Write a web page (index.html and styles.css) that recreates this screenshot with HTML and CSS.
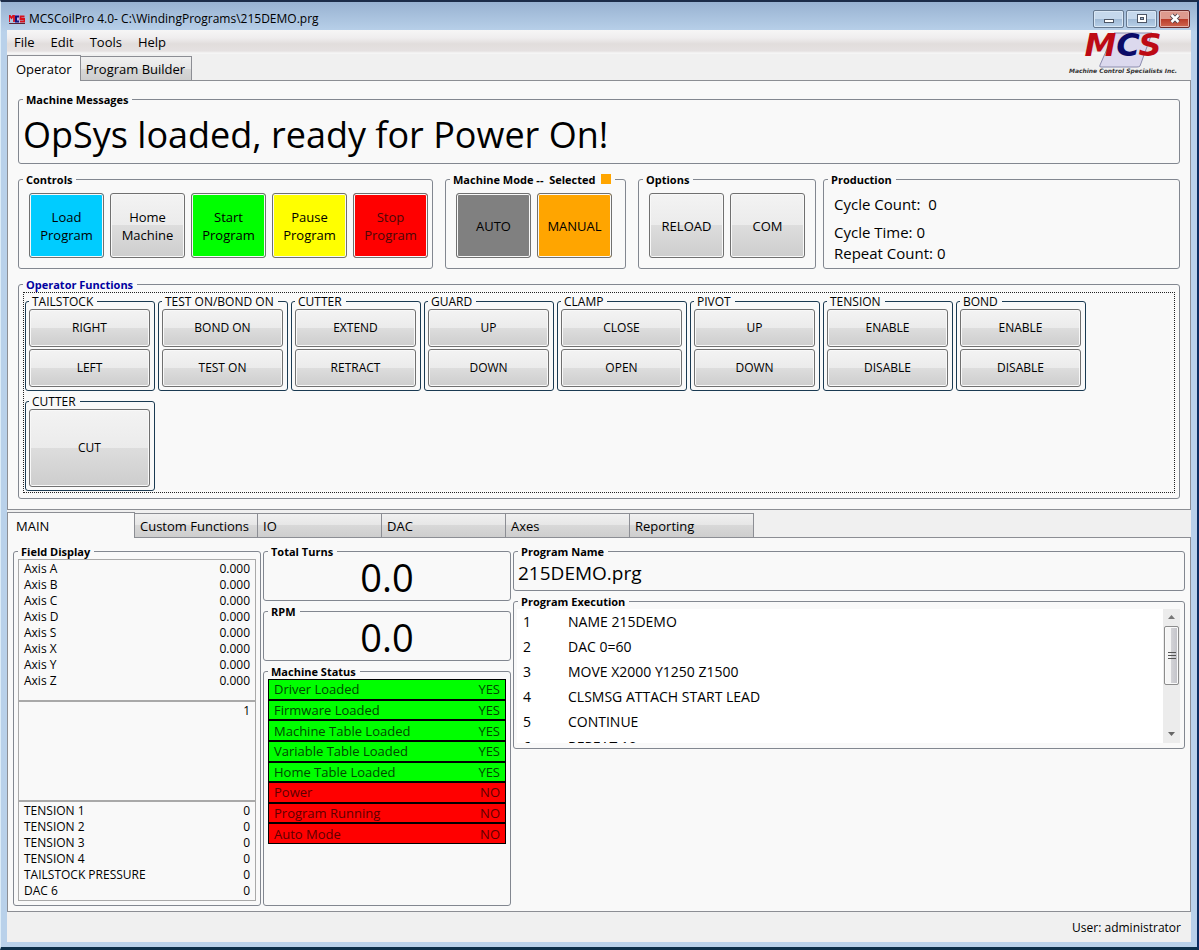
FILE: index.html
```
<!DOCTYPE html>
<html lang="en">
<head>
    <meta charset="UTF-8">
    <meta name="viewport" content="width=device-width, initial-scale=1.0">
    <title>MCSCoilPro 4.0</title>
    <link rel="stylesheet" href="styles.css">
</head>
<body>
<div class="window">
    <header class="titlebar">
        <svg class="app-icon" width="16" height="10" viewBox="0 0 16 10">
            <rect x="5" y="0" width="6" height="9" fill="#b9b4e4"/>
            <path d="M0 8V2h1l1.500 2L4 2h1v6M15.500 2.500h-4v2.500h4v2.500h-4.500" fill="none" stroke="#d8101c" stroke-width="1.800"/>
            <path d="M10 2.500H7v5h3" fill="none" stroke="#14147c" stroke-width="2"/>
            <path d="M0 9.500h16" stroke="#5b2334"/>
        </svg>
        <span class="title">MCSCoilPro 4.0- C:\WindingPrograms\215DEMO.prg</span>
        <div class="window-buttons">
            <button class="win-btn" aria-label="Minimize"><svg width="12" height="11"><rect x="1.500" y="6.500" width="9" height="3" fill="#fff" stroke="#4c5565"/></svg></button>
            <button class="win-btn" aria-label="Maximize"><svg width="12" height="11"><rect x="1.500" y="1.500" width="9" height="8" fill="#fff" stroke="#4c5565"/><rect x="4.500" y="4.500" width="3" height="2" fill="#9db5cf" stroke="#4c5565"/></svg></button>
            <button class="win-btn close" aria-label="Close"><svg width="12" height="11"><path d="M2.500 2l7 7M9.500 2l-7 7" stroke="#50424a" stroke-width="4.500"/><path d="M2.500 2l7 7M9.500 2l-7 7" stroke="#fff" stroke-width="2.500"/></svg></button>
        </div>
    </header>

    <nav class="menu">
        <button>File</button>
        <button>Edit</button>
        <button>Tools</button>
        <button>Help</button>
        <svg class="logo" width="118" height="42" viewBox="0 0 118 42">
            <path d="M50 1h38L76 34q-1 1-3 1H37q-2 0-1-2z" fill="#dcd9ee" stroke="#8c8cae"/>
            <text class="logo-name" x="59" y="24" text-anchor="middle"><tspan fill="#bd0a14">M</tspan><tspan fill="#0b0b68">C</tspan><tspan fill="#bd0a14">S</tspan></text>
            <text class="logo-tag" x="59" y="41" text-anchor="middle">Machine Control Specialists Inc.</text>
        </svg>
    </nav>

    <div class="tabs top-tabs">
        <button class="tab active">Operator</button>
        <button class="tab">Program Builder</button>
    </div>

    <main class="panel operator">
        <fieldset class="messages">
            <legend>Machine Messages</legend>
            OpSys loaded, ready for Power On!
        </fieldset>

        <div class="control-row">
            <fieldset class="buttons">
                <legend>Controls</legend>
                <button class="btn blue">Load<br>Program</button>
                <button class="btn">Home<br>Machine</button>
                <button class="btn green">Start<br>Program</button>
                <button class="btn yellow">Pause<br>Program</button>
                <button class="btn red">Stop<br>Program</button>
            </fieldset>
            <fieldset class="buttons">
                <legend>Machine Mode --&nbsp; Selected <span class="swatch"></span></legend>
                <button class="btn gray">AUTO</button>
                <button class="btn orange">MANUAL</button>
            </fieldset>
            <fieldset class="buttons">
                <legend>Options</legend>
                <button class="btn">RELOAD</button>
                <button class="btn">COM</button>
            </fieldset>
            <fieldset class="production">
                <legend>Production</legend>
                <p class="cycle-count">Cycle Count: &nbsp;0</p>
                <p>Cycle Time: 0</p>
                <p>Repeat Count: 0</p>
            </fieldset>
        </div>

        <fieldset class="functions">
            <legend>Operator Functions</legend>
            <div class="function-grid">
                <fieldset>
                    <legend>TAILSTOCK</legend>
                    <button class="btn">RIGHT</button>
                    <button class="btn">LEFT</button>
                </fieldset>
                <fieldset>
                    <legend>TEST ON/BOND ON</legend>
                    <button class="btn">BOND ON</button>
                    <button class="btn">TEST ON</button>
                </fieldset>
                <fieldset>
                    <legend>CUTTER</legend>
                    <button class="btn">EXTEND</button>
                    <button class="btn">RETRACT</button>
                </fieldset>
                <fieldset>
                    <legend>GUARD</legend>
                    <button class="btn">UP</button>
                    <button class="btn">DOWN</button>
                </fieldset>
                <fieldset>
                    <legend>CLAMP</legend>
                    <button class="btn">CLOSE</button>
                    <button class="btn">OPEN</button>
                </fieldset>
                <fieldset>
                    <legend>PIVOT</legend>
                    <button class="btn">UP</button>
                    <button class="btn">DOWN</button>
                </fieldset>
                <fieldset>
                    <legend>TENSION</legend>
                    <button class="btn">ENABLE</button>
                    <button class="btn">DISABLE</button>
                </fieldset>
                <fieldset>
                    <legend>BOND</legend>
                    <button class="btn">ENABLE</button>
                    <button class="btn">DISABLE</button>
                </fieldset>
                <fieldset>
                    <legend>CUTTER</legend>
                    <button class="btn tall">CUT</button>
                </fieldset>
            </div>
        </fieldset>
    </main>

    <div class="tabs main-tabs">
        <button class="tab active">MAIN</button>
        <button class="tab">Custom Functions</button>
        <button class="tab">IO</button>
        <button class="tab">DAC</button>
        <button class="tab">Axes</button>
        <button class="tab">Reporting</button>
    </div>

    <section class="panel details">
        <fieldset class="fields">
            <legend>Field Display</legend>
            <dl class="axes">
                <dt>Axis A</dt><dd>0.000</dd>
                <dt>Axis B</dt><dd>0.000</dd>
                <dt>Axis C</dt><dd>0.000</dd>
                <dt>Axis D</dt><dd>0.000</dd>
                <dt>Axis S</dt><dd>0.000</dd>
                <dt>Axis X</dt><dd>0.000</dd>
                <dt>Axis Y</dt><dd>0.000</dd>
                <dt>Axis Z</dt><dd>0.000</dd>
            </dl>
            <dl class="counter">
                <dt></dt><dd>1</dd>
            </dl>
            <dl class="tension">
                <dt>TENSION 1</dt><dd>0</dd>
                <dt>TENSION 2</dt><dd>0</dd>
                <dt>TENSION 3</dt><dd>0</dd>
                <dt>TENSION 4</dt><dd>0</dd>
                <dt>TAILSTOCK PRESSURE</dt><dd>0</dd>
                <dt>DAC 6</dt><dd>0</dd>
            </dl>
        </fieldset>

        <div class="column">
            <fieldset class="readout">
                <legend>Total Turns</legend>
                0.0
            </fieldset>
            <fieldset class="readout">
                <legend>RPM</legend>
                0.0
            </fieldset>
            <fieldset class="status">
                <legend>Machine Status</legend>
                <table>
                    <tr class="yes"><td>Driver Loaded</td><td>YES</td></tr>
                    <tr class="yes"><td>Firmware Loaded</td><td>YES</td></tr>
                    <tr class="yes"><td>Machine Table Loaded</td><td>YES</td></tr>
                    <tr class="yes"><td>Variable Table Loaded</td><td>YES</td></tr>
                    <tr class="yes"><td>Home Table Loaded</td><td>YES</td></tr>
                    <tr class="no"><td>Power</td><td>NO</td></tr>
                    <tr class="no"><td>Program Running</td><td>NO</td></tr>
                    <tr class="no"><td>Auto Mode</td><td>NO</td></tr>
                </table>
            </fieldset>
        </div>

        <div class="column">
            <fieldset class="program-name">
                <legend>Program Name</legend>
                215DEMO.prg
            </fieldset>
            <fieldset class="execution">
                <legend>Program Execution</legend>
                <div class="scroller">
                    <ol>
                        <li><span>1</span>NAME 215DEMO</li>
                        <li><span>2</span>DAC 0=60</li>
                        <li><span>3</span>MOVE X2000 Y1250 Z1500</li>
                        <li><span>4</span>CLSMSG ATTACH START LEAD</li>
                        <li><span>5</span>CONTINUE</li>
                        <li><span>6</span>REPEAT 10</li>
                    </ol>
                    <div class="scrollbar">
                        <svg width="17" height="17"><path d="M5 10l3.500-4 3.500 4z" fill="#777"/></svg>
                        <div class="thumb">
                            <svg width="8" height="8"><path d="M0 .5h8M0 3.500h8M0 6.500h8" stroke="#555"/></svg>
                        </div>
                        <svg class="down" width="17" height="17"><path d="M5 6l3.500 4L12 6z" fill="#666"/></svg>
                    </div>
                </div>
            </fieldset>
        </div>
    </section>

    <footer>User: administrator</footer>
</div>
</body>
</html>
```
FILE: styles.css
```
* {
    box-sizing: border-box;
}
body {
    margin: 0;
    background-color: #0c2340;
    font-family: "Open Sans", "Noto Sans", sans-serif;
    font-size: 12px;
    line-height: 16px;
    color: #000;
}
button {
    font-family: inherit;
    font-size: inherit;
    line-height: inherit;
    color: inherit;
}
.window {
    display: flex;
    flex-direction: column;
    min-height: 100vh;
    padding: 0 6px 5px;
    background: linear-gradient(#98b2d1, #b9d1ea 30px);
    border: 1px solid #dcecf8;
    border-top: 2px solid #1c2c48;
    border-right: 2px solid #0a2d62;
    border-bottom: 3px solid #0c2f4a;
}

/* title bar */
.titlebar {
    display: flex;
    align-items: center;
    height: 28px;
    padding: 5px 1px 0 2px;
}
.title {
    margin-left: 4px;
    flex: 1;
}
.window-buttons {
    display: flex;
    gap: 2px;
}
.win-btn {
    display: flex;
    align-items: center;
    justify-content: center;
    width: 31px;
    height: 18px;
    padding: 0;
    border: 1px solid #65788f;
    border-radius: 2px;
    background: linear-gradient(#c5d8ec 50%, #9fb9d5 50%, #b8d0e8);
    box-shadow: inset 0 0 0 1px #d9e7f5;
}
.win-btn.close {
    background: linear-gradient(#dd9a8e 50%, #b93a28 50%, #cf6650);
    border-color: #6b2b2b;
    box-shadow: inset 0 0 0 1px #e5b2aa;
}

/* menu */
.menu {
    position: relative;
    display: flex;
    height: 24px;
    padding-top: 2px;
    background: linear-gradient(#f6f6f6, #efedee 8px, #e1dddc 14px, #e5e1e1 21px, #f5f5f5 23px);
    font-size: 13px;
    line-height: 20px;
}
.menu button {
    padding: 0 8px 2px;
}
.menu button {
    border: 0;
    background: none;
}
.menu button:first-child {
    padding-left: 7px;
}
.logo {
    position: absolute;
    top: 2px;
    right: 9px;
    overflow: visible;
    font-family: "DejaVu Sans", sans-serif;
    font-weight: bold;
    font-style: italic;
}
.logo-name {
    font-size: 32px;
}
.logo-tag {
    font-size: 6px;
    fill: #333;
}

/* tabs */
.tabs {
    display: flex;
    align-items: flex-end;
    background-color: #f0f0f0;
}
.tab {
    height: 24px;
    padding: 1px 6px 0 5px;
    margin-left: -1px;
    border: 1px solid #8c8e94;
    border-bottom: 0;
    background: linear-gradient(#f0f0f0, #e6e6e6 50%, #d8d8d8 50%, #cecece);
    font-size: 13px;
    text-align: left;
    white-space: nowrap;
}
.tab.active {
    position: relative;
    height: 26px;
    margin: 0 0 -1px;
    padding: 0 8px;
    background: #f9f9f9;
}
.top-tabs {
    height: 26px;
}
.main-tabs {
    height: 27px;
}
.main-tabs .tab {
    width: 125px;
}
.main-tabs .active {
    width: 128px;
}
.main-tabs .tab:nth-child(2) {
    width: 124px;
}
.panel {
    background-color: #f9f9f9;
    border: 1px solid #8c8e94;
}

/* group boxes */
fieldset {
    min-width: 0;
    margin: 0;
    padding: 0 4px;
    border: 1px solid #828790;
    border-radius: 3px;
}
legend {
    height: 15px;
    padding: 0 4px 0 3px;
    font-size: 11px;
    line-height: 15px;
    font-weight: bold;
}
.operator {
    display: flex;
    flex-direction: column;
    gap: 8px;
    padding: 11px 10px 10px;
}
.messages {
    padding-bottom: 1px;
    font-size: 36px;
    line-height: 55px;
}
.control-row {
    display: grid;
    grid-template-columns: 415px 181px 178px 1fr;
    column-gap: 12px;
}
.buttons {
    padding: 6px 4px 10px 10px;
    font-size: 0;
    white-space: nowrap;
}
.buttons legend {
    margin-left: -6px;
}
.swatch {
    display: inline-block;
    width: 10px;
    height: 10px;
    margin-left: 3px;
    background-color: #ffa500;
}
.btn {
    padding: 0;
    border: 1px solid #707070;
    border-radius: 3px;
    background: linear-gradient(#f3f3f3, #ebebeb 50%, #dddddd 50%, #cdcdcd);
    box-shadow: inset 0 0 0 1px #f8f8f8;
    text-align: center;
}
.buttons .btn {
    width: 75px;
    height: 65px;
    margin-right: 6px;
    font-size: 13px;
    line-height: 18px;
    vertical-align: top;
}
.btn.blue {
    background: #00ccff;
}
.btn.green {
    background: #00ff00;
}
.btn.yellow {
    background: #ffff00;
}
.btn.red {
    background: #ff0000;
    color: #4a0808;
}
.btn.gray {
    background: #808080;
}
.btn.orange {
    background: #ffa500;
}
.production {
    margin-left: -5px;
    font-size: 15px;
    line-height: 21px;
}
.production p {
    margin: 0 6px;
}
.production .cycle-count {
    margin-top: 7px;
    margin-bottom: 7px;
}
.functions > legend {
    color: #0000a0;
}
.functions {
    padding-bottom: 5px;
}
.function-grid {
    display: flex;
    flex-wrap: wrap;
    gap: 3px;
    padding: 1px;
    border: 1px dotted #222;
}
.function-grid fieldset {
    display: flex;
    flex-direction: column;
    gap: 2px;
    width: 130px;
    padding: 0 4px 3px 3px;
    border-color: #1a3a52;
}
.function-grid legend {
    font-size: 12px;
    font-weight: normal;
}
.function-grid .btn {
    width: 100%;
    height: 38px;
}
.function-grid .tall {
    height: 78px;
}

/* main tab */
.details {
    flex: 1;
    display: grid;
    grid-template-columns: 248px 248px 1fr;
    gap: 2px;
    padding: 6px 5px 5px;
}
.column {
    display: flex;
    flex-direction: column;
    gap: 3px;
}
dl {
    display: grid;
    grid-template-columns: 1fr auto;
    align-content: start;
    margin: 0;
    padding: 1px 5px;
    border: 1px solid #a9a9a9;
}
dd {
    margin: 0;
    text-align: right;
}
.axes {
    height: 142px;
}
.counter {
    height: 100px;
}
.tension {
    height: 100px;
}
.readout {
    height: 57px;
    font-size: 38px;
    line-height: 36px;
    text-align: center;
}
.readout legend {
    text-align: left;
}
.status {
    flex: 1;
}
.status table {
    width: 100%;
    height: 165px;
    border-spacing: 0;
    font-size: 13px;
    line-height: 16px;
}
.status td {
    padding: 0 5px;
    border: 1px solid #000;
    border-right: 0;
}
.status td:last-child {
    border-right: 1px solid #000;
    border-left: 0;
    text-align: right;
}
.yes {
    background-color: #00ff00;
    color: #004800;
}
.no {
    background-color: #ff0000;
    color: #5c0000;
}
.program-name {
    height: 47px;
    font-size: 19px;
    line-height: 28px;
}
.execution {
    padding: 0 4px 5px 3px;
}
.execution legend {
    margin-left: 1px;
}
.scroller {
    display: flex;
    height: 134px;
    background-color: #fff;
    overflow: hidden;
}
.scroller ol {
    flex: 1;
    margin: 0;
    padding: 0 6px;
    list-style: none;
    font-size: 14px;
    line-height: 25px;
}
.scroller li {
    display: flex;
}
.scroller li span {
    width: 45px;
}
.scrollbar {
    display: flex;
    flex-direction: column;
    width: 17px;
    background-color: #ececec;
}
.thumb {
    display: flex;
    align-items: center;
    justify-content: center;
    height: 59px;
    margin: 0 1px;
    border: 1px solid #8c8c8c;
    border-radius: 2px;
    background: linear-gradient(to right, #f5f5f5 45%, #d2d2d6 50%, #c2c2c8);
    box-shadow: inset 0 0 0 1px #fafafa;
}
.scrollbar .down {
    margin-top: auto;
}
footer {
    height: 30px;
    padding: 0 10px;
    background-color: #f0f0f0;
    line-height: 32px;
    text-align: right;
}
```
